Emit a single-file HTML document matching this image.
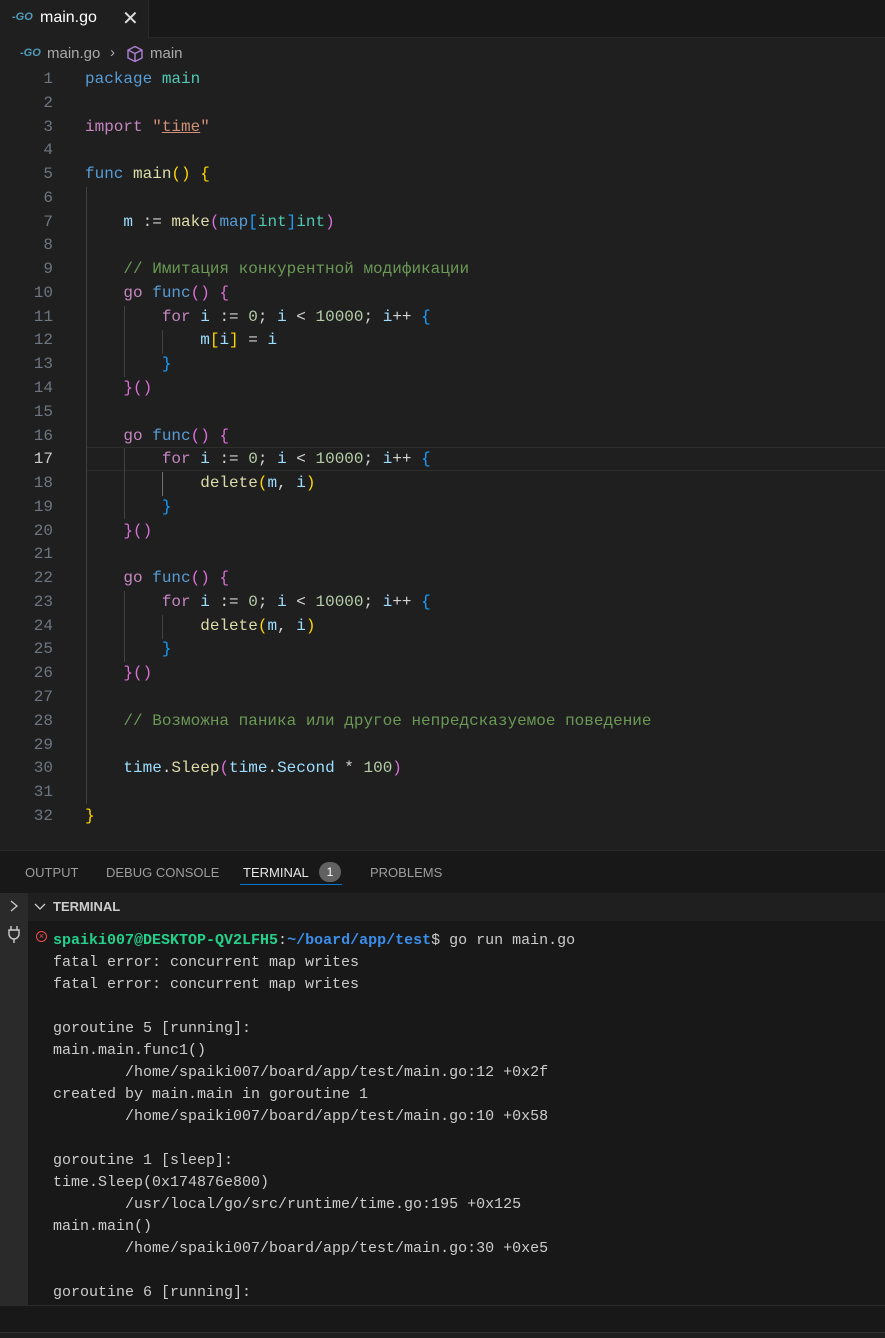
<!DOCTYPE html>
<html><head><meta charset="utf-8"><style>
*{margin:0;padding:0;box-sizing:border-box}
body{width:885px;height:1338px;background:#1f1f1f;overflow:hidden;position:relative;font-family:"Liberation Sans",sans-serif}
.abs{position:absolute}
.code{position:absolute;left:0;top:68px;width:885px;font-family:"Liberation Mono","DejaVu Sans Mono",monospace;font-size:16px}
.ln{position:absolute;height:23.77px;line-height:23.77px;white-space:pre;width:885px}
.num{position:absolute;left:0;width:53px;text-align:right;color:#6e7681}
.txt{position:absolute;left:85px;color:#d4d4d4}
.k{color:#569cd6}.t{color:#4ec9b0}.p{color:#c586c0}.s{color:#ce9178}.f{color:#dcdcaa}.v{color:#9cdcfe}.n{color:#b5cea8}.c{color:#6a9955}
.b1{color:#ffd700}.b2{color:#da70d6}.b3{color:#179fff}
.term{position:absolute;left:53px;font-family:"Liberation Mono","DejaVu Sans Mono",monospace;font-size:15px;color:#cccccc;white-space:pre;line-height:22px}
.guide{position:absolute;width:1px;background:#404040}
</style></head><body>
<div class="abs" style="left:0;top:0;width:885px;height:38px;background:#181818;border-bottom:1px solid #2b2b2b"></div>
<div class="abs" style="left:0;top:0;width:149px;height:39px;background:#1f1f1f;border-right:1px solid #2b2b2b"></div>
<div class="abs" style="left:12px;top:11px;font-size:11px;font-weight:bold;font-style:italic;color:#519aba">-GO</div>
<div class="abs" style="left:40px;top:9px;font-size:16px;color:#ffffff">main.go</div>
<div class="abs" style="left:122px;top:6px;font-size:20px;color:#ddd">✕</div>
<div class="abs" style="left:20px;top:47px;font-size:11px;font-weight:bold;font-style:italic;color:#519aba">-GO</div>
<div class="abs" style="left:47px;top:45px;font-size:15px;color:#a9a9a9">main.go</div>
<div class="abs" style="left:110px;top:44px;font-size:15px;color:#a9a9a9">›</div>
<svg class="abs" style="left:126px;top:45px" width="18" height="18" viewBox="0 0 18 18"><path d="M9 1.5L16 5v8l-7 3.5L2 13V5z M2 5l7 3.5L16 5 M9 8.5V16.5" fill="none" stroke="#b180d7" stroke-width="1.4"/></svg>
<div class="abs" style="left:150px;top:45px;font-size:15px;color:#a9a9a9">main</div>
<div class="abs" style="left:86px;top:447px;width:799px;height:24px;border-top:1px solid #2e2e2e;border-bottom:1px solid #2e2e2e"></div>
<div class="guide" style="left:86px;top:187px;height:617px"></div>
<div class="guide" style="left:124px;top:306px;height:71px"></div>
<div class="guide" style="left:162px;top:330px;height:24px"></div>
<div class="guide" style="left:124px;top:448px;height:71px"></div>
<div class="guide" style="left:162px;top:472px;height:24px;background:#707070"></div>
<div class="guide" style="left:124px;top:591px;height:71px"></div>
<div class="guide" style="left:162px;top:615px;height:24px"></div>
<div class="code">
<div class="ln" style="top:0"><span class="num">1</span><span class="txt"><span class="k">package</span> <span class="t">main</span></span></div>
<div class="ln" style="top:23.77px"><span class="num">2</span></div>
<div class="ln" style="top:47.54px"><span class="num">3</span><span class="txt"><span class="p">import</span> <span class="s">"<u>time</u>"</span></span></div>
<div class="ln" style="top:71.31px"><span class="num">4</span></div>
<div class="ln" style="top:95.08px"><span class="num">5</span><span class="txt"><span class="k">func</span> <span class="f">main</span><span class="b1">()</span> <span class="b1">{</span></span></div>
<div class="ln" style="top:118.85px"><span class="num">6</span></div>
<div class="ln" style="top:142.62px"><span class="num">7</span><span class="txt">    <span class="v">m</span> := <span class="f">make</span><span class="b2">(</span><span class="k">map</span><span class="b3">[</span><span class="t">int</span><span class="b3">]</span><span class="t">int</span><span class="b2">)</span></span></div>
<div class="ln" style="top:166.39px"><span class="num">8</span></div>
<div class="ln" style="top:190.16px"><span class="num">9</span><span class="txt">    <span class="c">// Имитация конкурентной модификации</span></span></div>
<div class="ln" style="top:213.93px"><span class="num">10</span><span class="txt">    <span class="p">go</span> <span class="k">func</span><span class="b2">()</span> <span class="b2">{</span></span></div>
<div class="ln" style="top:237.7px"><span class="num">11</span><span class="txt">        <span class="p">for</span> <span class="v">i</span> := <span class="n">0</span>; <span class="v">i</span> &lt; <span class="n">10000</span>; <span class="v">i</span>++ <span class="b3">{</span></span></div>
<div class="ln" style="top:261.47px"><span class="num">12</span><span class="txt">            <span class="v">m</span><span class="b1">[</span><span class="v">i</span><span class="b1">]</span> = <span class="v">i</span></span></div>
<div class="ln" style="top:285.24px"><span class="num">13</span><span class="txt">        <span class="b3">}</span></span></div>
<div class="ln" style="top:309.01px"><span class="num">14</span><span class="txt">    <span class="b2">}()</span></span></div>
<div class="ln" style="top:332.78px"><span class="num">15</span></div>
<div class="ln" style="top:356.55px"><span class="num">16</span><span class="txt">    <span class="p">go</span> <span class="k">func</span><span class="b2">()</span> <span class="b2">{</span></span></div>
<div class="ln" style="top:380.32px"><span class="num" style="color:#cccccc">17</span><span class="txt">        <span class="p">for</span> <span class="v">i</span> := <span class="n">0</span>; <span class="v">i</span> &lt; <span class="n">10000</span>; <span class="v">i</span>++ <span class="b3">{</span></span></div>
<div class="ln" style="top:404.09px"><span class="num">18</span><span class="txt">            <span class="f">delete</span><span class="b1">(</span><span class="v">m</span>, <span class="v">i</span><span class="b1">)</span></span></div>
<div class="ln" style="top:427.86px"><span class="num">19</span><span class="txt">        <span class="b3">}</span></span></div>
<div class="ln" style="top:451.63px"><span class="num">20</span><span class="txt">    <span class="b2">}()</span></span></div>
<div class="ln" style="top:475.4px"><span class="num">21</span></div>
<div class="ln" style="top:499.17px"><span class="num">22</span><span class="txt">    <span class="p">go</span> <span class="k">func</span><span class="b2">()</span> <span class="b2">{</span></span></div>
<div class="ln" style="top:522.94px"><span class="num">23</span><span class="txt">        <span class="p">for</span> <span class="v">i</span> := <span class="n">0</span>; <span class="v">i</span> &lt; <span class="n">10000</span>; <span class="v">i</span>++ <span class="b3">{</span></span></div>
<div class="ln" style="top:546.71px"><span class="num">24</span><span class="txt">            <span class="f">delete</span><span class="b1">(</span><span class="v">m</span>, <span class="v">i</span><span class="b1">)</span></span></div>
<div class="ln" style="top:570.48px"><span class="num">25</span><span class="txt">        <span class="b3">}</span></span></div>
<div class="ln" style="top:594.25px"><span class="num">26</span><span class="txt">    <span class="b2">}()</span></span></div>
<div class="ln" style="top:618.02px"><span class="num">27</span></div>
<div class="ln" style="top:641.79px"><span class="num">28</span><span class="txt">    <span class="c">// Возможна паника или другое непредсказуемое поведение</span></span></div>
<div class="ln" style="top:665.56px"><span class="num">29</span></div>
<div class="ln" style="top:689.33px"><span class="num">30</span><span class="txt">    <span class="v">time</span>.<span class="f">Sleep</span><span class="b2">(</span><span class="v">time</span>.<span class="v">Second</span> * <span class="n">100</span><span class="b2">)</span></span></div>
<div class="ln" style="top:713.1px"><span class="num">31</span></div>
<div class="ln" style="top:736.87px"><span class="num">32</span><span class="txt"><span class="b1">}</span></span></div>
</div>
<div class="abs" style="left:0;top:850px;width:885px;height:488px;background:#181818;border-top:1px solid #2b2b2b"></div>
<div class="abs" style="left:25px;top:865px;font-size:13px;color:#9d9d9d">OUTPUT</div>
<div class="abs" style="left:106px;top:865px;font-size:13px;color:#9d9d9d">DEBUG CONSOLE</div>
<div class="abs" style="left:243px;top:865px;font-size:13px;color:#e7e7e7">TERMINAL</div>
<div class="abs" style="left:319px;top:862px;width:22px;height:20px;border-radius:10px;background:#616161;color:#fff;font-size:12px;text-align:center;line-height:20px">1</div>
<div class="abs" style="left:240px;top:884px;width:102px;height:1px;background:#0078d4"></div>
<div class="abs" style="left:370px;top:865px;font-size:13px;color:#9d9d9d">PROBLEMS</div>
<div class="abs" style="left:0;top:893px;width:885px;height:28px;background:#1f1f1f"></div>
<div class="abs" style="left:0;top:893px;width:28px;height:412px;background:#2a2a2a"></div>
<svg class="abs" style="left:8px;top:899px" width="12" height="14"><path d="M3 2l6 5-6 5" fill="none" stroke="#ccc" stroke-width="1.3"/></svg>
<svg class="abs" style="left:33px;top:902px" width="14" height="10"><path d="M2 2l5 5 5-5" fill="none" stroke="#ccc" stroke-width="1.3"/></svg>
<div class="abs" style="left:53px;top:899px;font-size:13px;font-weight:bold;color:#cccccc">TERMINAL</div>
<svg class="abs" style="left:7px;top:925px" width="14" height="18"><path d="M4 1v4M10 1v4M2 5h10v4a5 5 0 0 1-10 0z M7 14v4" fill="none" stroke="#ccc" stroke-width="1.4"/></svg>
<div class="abs" style="left:36px;top:931px;width:11px;height:11px;border:1.5px solid #f14c4c;border-radius:50%;color:#f14c4c;font-size:9px;line-height:8px;text-align:center">×</div>
<div class="term" style="top:930px"><b style="color:#23d18b">spaiki007@DESKTOP-QV2LFH5</b>:<b style="color:#3b8eea">~/board/app/test</b>$ go run main.go
fatal error: concurrent map writes
fatal error: concurrent map writes

goroutine 5 [running]:
main.main.func1()
        /home/spaiki007/board/app/test/main.go:12 +0x2f
created by main.main in goroutine 1
        /home/spaiki007/board/app/test/main.go:10 +0x58

goroutine 1 [sleep]:
time.Sleep(0x174876e800)
        /usr/local/go/src/runtime/time.go:195 +0x125
main.main()
        /home/spaiki007/board/app/test/main.go:30 +0xe5

goroutine 6 [running]:</div>
<div class="abs" style="left:0;top:1305px;width:885px;height:1px;background:#2b2b2b"></div>
<div class="abs" style="left:0;top:1332px;width:885px;height:6px;background:#1f1f1f;border-top:1px solid #333"></div>
</body></html>
